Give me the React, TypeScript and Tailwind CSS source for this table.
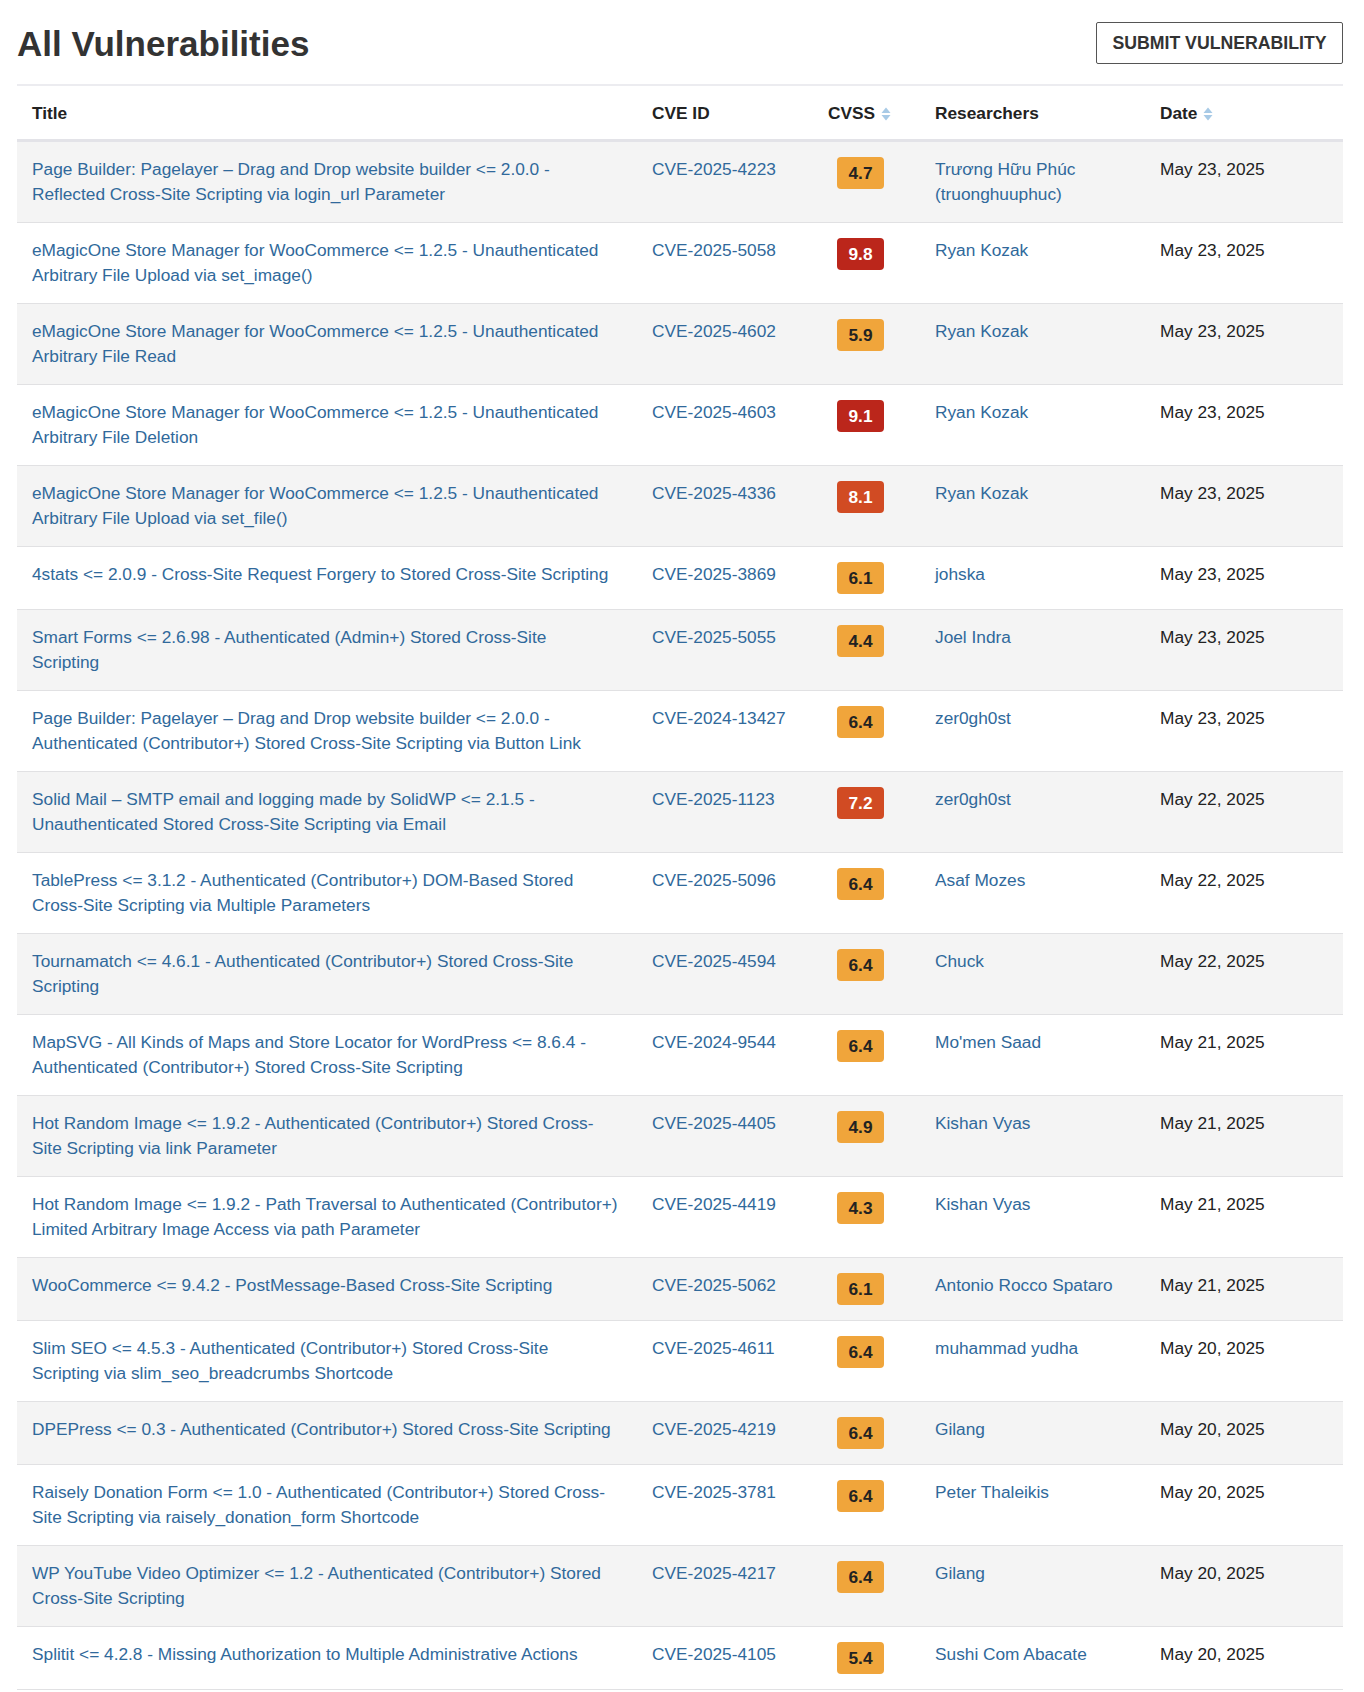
import React from "react";

type Row = {
  title: string[];
  cve: string;
  cvss: string;
  researchers: string[];
  date: string;
};

const rows: Row[] = [
  { title: ["Page Builder: Pagelayer – Drag and Drop website builder <= 2.0.0 -", "Reflected Cross-Site Scripting via login_url Parameter"], cve: "CVE-2025-4223", cvss: "4.7", researchers: ["Trương Hữu Phúc", "(truonghuuphuc)"], date: "May 23, 2025" },
  { title: ["eMagicOne Store Manager for WooCommerce <= 1.2.5 - Unauthenticated", "Arbitrary File Upload via set_image()"], cve: "CVE-2025-5058", cvss: "9.8", researchers: ["Ryan Kozak"], date: "May 23, 2025" },
  { title: ["eMagicOne Store Manager for WooCommerce <= 1.2.5 - Unauthenticated", "Arbitrary File Read"], cve: "CVE-2025-4602", cvss: "5.9", researchers: ["Ryan Kozak"], date: "May 23, 2025" },
  { title: ["eMagicOne Store Manager for WooCommerce <= 1.2.5 - Unauthenticated", "Arbitrary File Deletion"], cve: "CVE-2025-4603", cvss: "9.1", researchers: ["Ryan Kozak"], date: "May 23, 2025" },
  { title: ["eMagicOne Store Manager for WooCommerce <= 1.2.5 - Unauthenticated", "Arbitrary File Upload via set_file()"], cve: "CVE-2025-4336", cvss: "8.1", researchers: ["Ryan Kozak"], date: "May 23, 2025" },
  { title: ["4stats <= 2.0.9 - Cross-Site Request Forgery to Stored Cross-Site Scripting"], cve: "CVE-2025-3869", cvss: "6.1", researchers: ["johska"], date: "May 23, 2025" },
  { title: ["Smart Forms <= 2.6.98 - Authenticated (Admin+) Stored Cross-Site", "Scripting"], cve: "CVE-2025-5055", cvss: "4.4", researchers: ["Joel Indra"], date: "May 23, 2025" },
  { title: ["Page Builder: Pagelayer – Drag and Drop website builder <= 2.0.0 -", "Authenticated (Contributor+) Stored Cross-Site Scripting via Button Link"], cve: "CVE-2024-13427", cvss: "6.4", researchers: ["zer0gh0st"], date: "May 23, 2025" },
  { title: ["Solid Mail – SMTP email and logging made by SolidWP <= 2.1.5 -", "Unauthenticated Stored Cross-Site Scripting via Email"], cve: "CVE-2025-1123", cvss: "7.2", researchers: ["zer0gh0st"], date: "May 22, 2025" },
  { title: ["TablePress <= 3.1.2 - Authenticated (Contributor+) DOM-Based Stored", "Cross-Site Scripting via Multiple Parameters"], cve: "CVE-2025-5096", cvss: "6.4", researchers: ["Asaf Mozes"], date: "May 22, 2025" },
  { title: ["Tournamatch <= 4.6.1 - Authenticated (Contributor+) Stored Cross-Site", "Scripting"], cve: "CVE-2025-4594", cvss: "6.4", researchers: ["Chuck"], date: "May 22, 2025" },
  { title: ["MapSVG - All Kinds of Maps and Store Locator for WordPress <= 8.6.4 -", "Authenticated (Contributor+) Stored Cross-Site Scripting"], cve: "CVE-2024-9544", cvss: "6.4", researchers: ["Mo'men Saad"], date: "May 21, 2025" },
  { title: ["Hot Random Image <= 1.9.2 - Authenticated (Contributor+) Stored Cross-", "Site Scripting via link Parameter"], cve: "CVE-2025-4405", cvss: "4.9", researchers: ["Kishan Vyas"], date: "May 21, 2025" },
  { title: ["Hot Random Image <= 1.9.2 - Path Traversal to Authenticated (Contributor+)", "Limited Arbitrary Image Access via path Parameter"], cve: "CVE-2025-4419", cvss: "4.3", researchers: ["Kishan Vyas"], date: "May 21, 2025" },
  { title: ["WooCommerce <= 9.4.2 - PostMessage-Based Cross-Site Scripting"], cve: "CVE-2025-5062", cvss: "6.1", researchers: ["Antonio Rocco Spataro"], date: "May 21, 2025" },
  { title: ["Slim SEO <= 4.5.3 - Authenticated (Contributor+) Stored Cross-Site", "Scripting via slim_seo_breadcrumbs Shortcode"], cve: "CVE-2025-4611", cvss: "6.4", researchers: ["muhammad yudha"], date: "May 20, 2025" },
  { title: ["DPEPress <= 0.3 - Authenticated (Contributor+) Stored Cross-Site Scripting"], cve: "CVE-2025-4219", cvss: "6.4", researchers: ["Gilang"], date: "May 20, 2025" },
  { title: ["Raisely Donation Form <= 1.0 - Authenticated (Contributor+) Stored Cross-", "Site Scripting via raisely_donation_form Shortcode"], cve: "CVE-2025-3781", cvss: "6.4", researchers: ["Peter Thaleikis"], date: "May 20, 2025" },
  { title: ["WP YouTube Video Optimizer <= 1.2 - Authenticated (Contributor+) Stored", "Cross-Site Scripting"], cve: "CVE-2025-4217", cvss: "6.4", researchers: ["Gilang"], date: "May 20, 2025" },
  { title: ["Splitit <= 4.2.8 - Missing Authorization to Multiple Administrative Actions"], cve: "CVE-2025-4105", cvss: "5.4", researchers: ["Sushi Com Abacate"], date: "May 20, 2025" },
];

const badgeClass = (score: string) => {
  const n = parseFloat(score);
  if (n >= 9) return "bg-[#bb261b] text-white";
  if (n >= 7) return "bg-[#d14b23] text-white";
  return "bg-[#f0a53b] text-[#222]";
};

const SortIcon = () => (
  <svg width="10" height="14" viewBox="0 0 10 14" className="ml-[6px] inline-block">
    <path d="M5 0.5 L9.5 6 H0.5 Z" fill="#a8cae6" />
    <path d="M5 13.5 L9.5 8 H0.5 Z" fill="#a8cae6" />
  </svg>
);

const Th = ({ children }: { children: React.ReactNode }) => (
  <th className="pl-[15px] pr-[15px] pt-[15px] pb-[13px] text-left font-bold text-[#222]">
    <span className="inline-flex items-center">{children}</span>
  </th>
);

export default function App() {
  return (
    <div className="bg-white min-h-screen text-[17.3px] leading-[25px] text-[#222]" style={{ fontFamily: '"Liberation Sans", Arial, Helvetica, sans-serif' }}>
      <div className="ml-[17px] w-[1326px]">
        <div className="pt-[22px] mb-[20px] flex items-center justify-between">
          <h1 className="text-[35px] leading-none font-bold text-[#333]">All Vulnerabilities</h1>
          <button className="h-[42px] w-[247px] border border-[#555] rounded-[2px] text-[17.7px] font-bold text-[#333] uppercase">
            Submit Vulnerability
          </button>
        </div>
        <table className="w-full table-fixed border-collapse">
          <colgroup>
            <col className="w-[620px]" />
            <col className="w-[176px]" />
            <col className="w-[107px]" />
            <col className="w-[225px]" />
            <col className="w-[198px]" />
          </colgroup>
          <thead>
            <tr className="border-t-2 border-t-[#ececf0] border-b-[3px] border-b-[#e3e3e8]">
              <Th>Title</Th>
              <Th>CVE ID</Th>
              <Th>
                CVSS <SortIcon />
              </Th>
              <Th>Researchers</Th>
              <Th>
                Date <SortIcon />
              </Th>
            </tr>
          </thead>
          <tbody>
            {rows.map((r, i) => (
              <tr key={r.cve} className={`border-b border-[#e1e1e3] align-top ${i % 2 === 0 ? "bg-[#f4f4f4]" : "bg-white"}`}>
                <td className="px-[15px] py-[15px] text-[#30699b]">
                  {r.title.map((l) => (
                    <span key={l} className="block whitespace-nowrap">{l}</span>
                  ))}
                </td>
                <td className="px-[15px] py-[15px] text-[#30699b] whitespace-nowrap">{r.cve}</td>
                <td className="px-[15px] py-[15px]">
                  <div className={`ml-[9px] w-[47px] h-[32px] rounded-[4px] flex items-center justify-center font-bold ${badgeClass(r.cvss)}`}>
                    {r.cvss}
                  </div>
                </td>
                <td className="px-[15px] py-[15px] text-[#30699b]">
                  {r.researchers.map((l) => (
                    <span key={l} className="block">{l}</span>
                  ))}
                </td>
                <td className="px-[15px] py-[15px] text-[#222] whitespace-nowrap">{r.date}</td>
              </tr>
            ))}
          </tbody>
        </table>
      </div>
    </div>
  );
}
